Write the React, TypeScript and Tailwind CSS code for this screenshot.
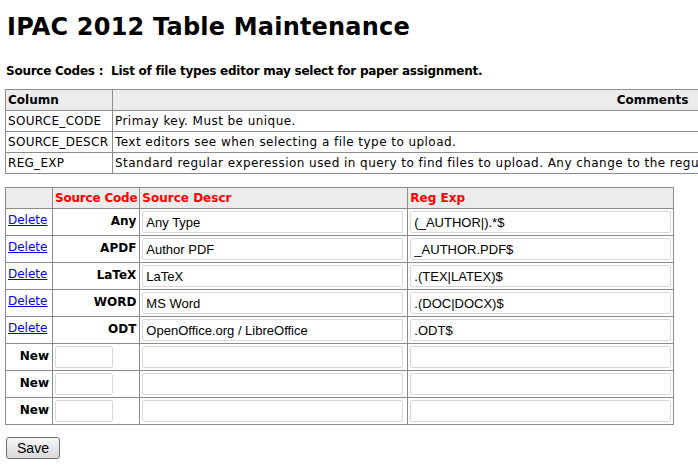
import React from 'react';

const verdana = "font-['DejaVu_Sans','Liberation_Sans',sans-serif]";
const arial = "font-['Liberation_Sans',Arial,sans-serif]";

const columns = [
  { name: 'SOURCE_CODE', comment: 'Primay key. Must be unique.' },
  { name: 'SOURCE_DESCR', comment: 'Text editors see when selecting a file type to upload.' },
  {
    name: 'REG_EXP',
    comment:
      'Standard regular experession used in query to find files to upload. Any change to the regular expression must be matched by the upload file names.',
  },
];

const codes = [
  { code: 'Any', descr: 'Any Type', regexp: '(_AUTHOR|).*$' },
  { code: 'APDF', descr: 'Author PDF', regexp: '_AUTHOR.PDF$' },
  { code: 'LaTeX', descr: 'LaTeX', regexp: '.(TEX|LATEX)$' },
  { code: 'WORD', descr: 'MS Word', regexp: '.(DOC|DOCX)$' },
  { code: 'ODT', descr: 'OpenOffice.org / LibreOffice', regexp: '.ODT$' },
];

const cell = 'border border-[#8c8c8c] px-[2px] py-[2px]';

const TextBox: React.FC<{ value?: string; width: string }> = ({ value = '', width }) => (
  <input
    type="text"
    defaultValue={value}
    className={`${width} ${arial} block h-[22px] rounded-[2px] border border-[#d8d8d8] bg-white px-[3px] text-[13px] text-black outline-none`}
  />
);

export default function App() {
  return (
    <div className={`${verdana} h-[472px] w-[698px] overflow-hidden bg-white text-[12px] leading-[16px] text-black`}>
      <h1 className="ml-[7px] mt-[13px] whitespace-nowrap text-[24px] font-bold leading-[28px] tracking-[0.2px]">
        IPAC 2012 Table Maintenance
      </h1>

      <p className="ml-[6px] mt-[22px] whitespace-pre font-bold tracking-[-0.25px]">
        Source Codes :  List of file types editor may select for paper assignment.
      </p>

      <table className="ml-[5px] mt-[10px] w-[1188px] border-collapse">
        <thead>
          <tr className="h-[21px] bg-[#ececec]">
            <th className={`${cell} text-left`}>Column</th>
            <th className={`${cell} text-center`}>Comments</th>
          </tr>
        </thead>
        <tbody className="tracking-[0.45px]">
          {columns.map((c) => (
            <tr key={c.name} className="h-[21px]">
              <td className={`${cell} w-[107px] whitespace-nowrap tracking-[0.3px]`}>{c.name}</td>
              <td className={`${cell} whitespace-nowrap`}>{c.comment}</td>
            </tr>
          ))}
        </tbody>
      </table>

      <table className="ml-[5px] mt-[13px] border-collapse">
        <thead>
          <tr className="h-[21px] bg-[#ececec] text-left font-bold text-[#ff0000]">
            <th className={`${cell} w-[47px]`}></th>
            <th className={`${cell} w-[87px] whitespace-nowrap tracking-[-0.2px]`}>Source Code</th>
            <th className={`${cell} w-[268px]`}>Source Descr</th>
            <th className={`${cell} w-[266px]`}>Reg Exp</th>
          </tr>
        </thead>
        <tbody>
          {codes.map((r) => (
            <tr key={r.code}>
              <td className={`${cell} pt-[3px] align-top`}>
                <a href="#" className="text-[#0000ee] underline">
                  Delete
                </a>
              </td>
              <td className={`${cell} pr-[3px] pt-[4px] text-right align-top font-bold`}>{r.code}</td>
              <td className={cell}>
                <TextBox value={r.descr} width="w-[261px]" />
              </td>
              <td className={cell}>
                <TextBox value={r.regexp} width="w-[261px]" />
              </td>
            </tr>
          ))}
          {[0, 1, 2].map((i) => (
            <tr key={i}>
              <td className={`${cell} pr-[3px] pt-[4px] text-right align-top font-bold`}>New</td>
              <td className={cell}>
                <TextBox width="w-[58px]" />
              </td>
              <td className={cell}>
                <TextBox width="w-[261px]" />
              </td>
              <td className={cell}>
                <TextBox width="w-[261px]" />
              </td>
            </tr>
          ))}
        </tbody>
      </table>

      <button
        type="button"
        className={`${arial} ml-[6px] mt-[12px] h-[22px] w-[54px] rounded-[3px] border border-[#707070] bg-gradient-to-b from-[#f6f6f6] to-[#d9d9d9] text-[14px] text-black`}
      >
        Save
      </button>
    </div>
  );
}
